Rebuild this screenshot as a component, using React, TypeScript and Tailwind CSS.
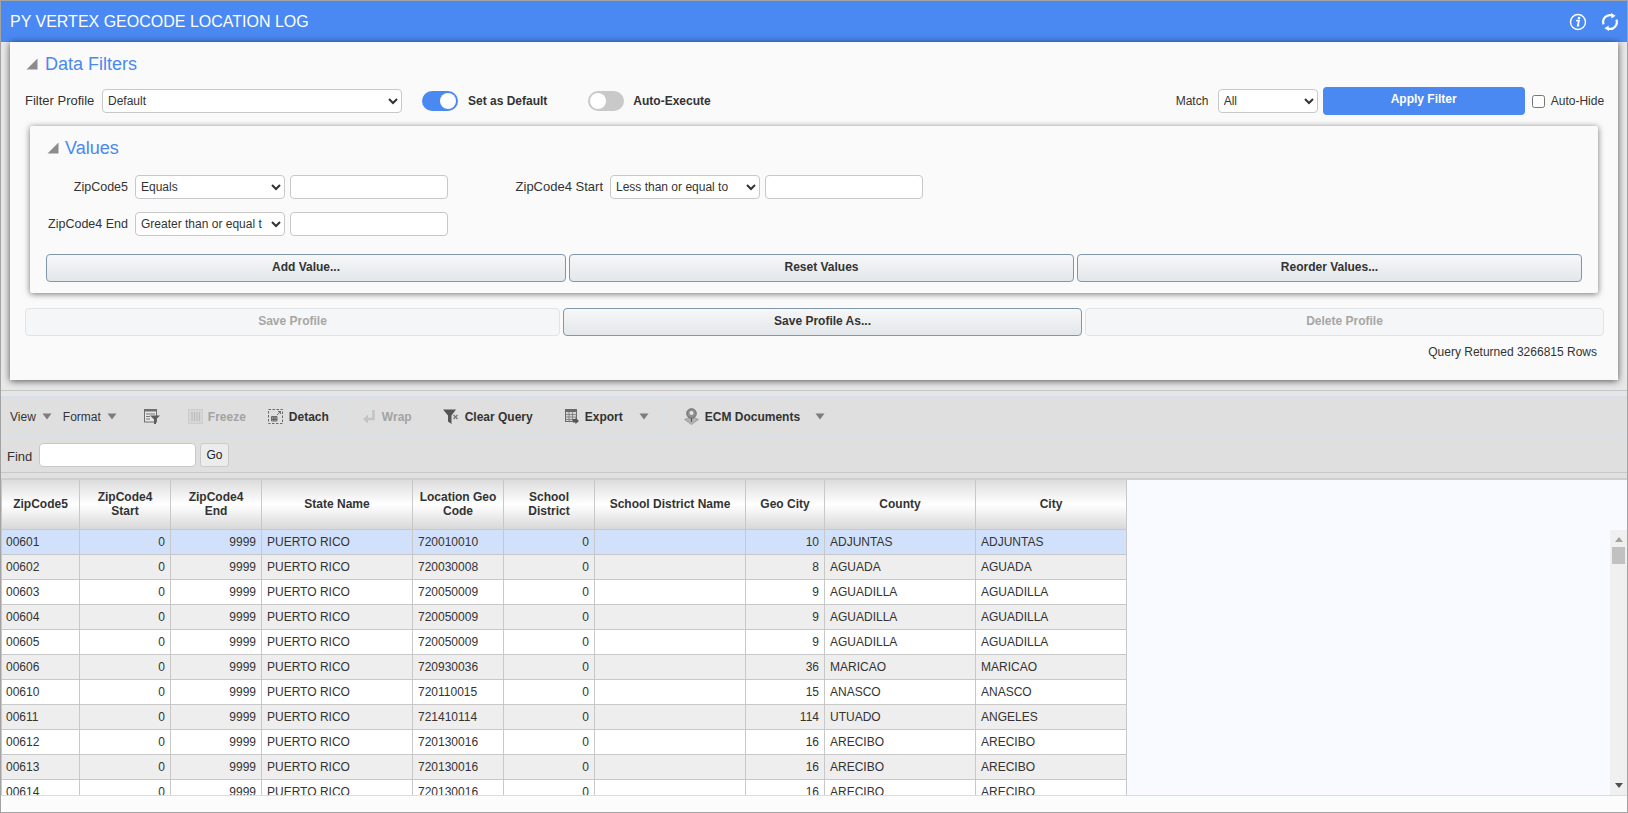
import type { ReactNode } from 'react'

const HEADERS = [
  ['ZipCode5'],
  ['ZipCode4', 'Start'],
  ['ZipCode4', 'End'],
  ['State Name'],
  ['Location Geo', 'Code'],
  ['School', 'District'],
  ['School District Name'],
  ['Geo City'],
  ['County'],
  ['City'],
]

const ROWS = [
  ['00601', '720010010', '10', 'ADJUNTAS', 'ADJUNTAS'],
  ['00602', '720030008', '8', 'AGUADA', 'AGUADA'],
  ['00603', '720050009', '9', 'AGUADILLA', 'AGUADILLA'],
  ['00604', '720050009', '9', 'AGUADILLA', 'AGUADILLA'],
  ['00605', '720050009', '9', 'AGUADILLA', 'AGUADILLA'],
  ['00606', '720930036', '36', 'MARICAO', 'MARICAO'],
  ['00610', '720110015', '15', 'ANASCO', 'ANASCO'],
  ['00611', '721410114', '114', 'UTUADO', 'ANGELES'],
  ['00612', '720130016', '16', 'ARECIBO', 'ARECIBO'],
  ['00613', '720130016', '16', 'ARECIBO', 'ARECIBO'],
  ['00614', '720130016', '16', 'ARECIBO', 'ARECIBO'],
]

function Triangle() {
  return (
    <svg width="12" height="12" viewBox="0 0 12 12" className="shrink-0">
      <polygon points="11.5,0.5 11.5,11.5 0.5,11.5" fill="#8c8c8c" />
    </svg>
  )
}

function Caret({ className }: { className: string }) {
  return (
    <svg width="10" height="7" viewBox="0 0 10 7" className={className}>
      <polygon points="0.5,0.5 9.5,0.5 5,6.5" fill="#7d7d7d" />
    </svg>
  )
}

function Sep({ className }: { className: string }) {
  return <div className={`w-px self-center bg-[#d9e0e8] ${className}`} />
}

function Toggle({ on }: { on: boolean }) {
  return (
    <div className={`flex h-5 w-9 items-center rounded-full px-[2px] ${on ? 'justify-end bg-[#4a88f2]' : 'justify-start bg-[#c9c9c9]'}`}>
      <div className="h-4 w-4 rounded-full bg-white" />
    </div>
  )
}

function Btn({ w, children, disabled }: { w: string; children: ReactNode; disabled?: boolean }) {
  return (
    <div
      className={`flex h-full items-center justify-center rounded-[4px] border pb-[2px] text-xs font-bold ${w} ${
        disabled
          ? 'border-[#e0e4e7] bg-[#f5f6f7] text-[#a6a6a6]'
          : 'border-[#7f97ad] bg-[linear-gradient(#f6f7f8,#e3e7ea)] text-[#333]'
      }`}
    >
      {children}
    </div>
  )
}

function FieldSelect({ w, value }: { w: string; value: string }) {
  return (
    <select
      defaultValue={value}
      className={`h-6 rounded-[4px] border border-[#c8c8c8] bg-white pl-[1px] pr-[6px] text-xs text-[#333] ${w}`}
    >
      <option>{value}</option>
    </select>
  )
}

function FieldInput({ w }: { w: string }) {
  return <input className={`h-6 rounded-[4px] border border-[#c8c8c8] bg-white ${w}`} />
}

export default function App() {
  return (
    <div className="flex h-[813px] w-[1628px] flex-col overflow-hidden border border-[#a3a3a3] bg-[#e8e8e8] font-['Liberation_Sans',Arial,sans-serif] text-xs text-[#333]">
      <div className="flex h-[41px] shrink-0 items-center bg-[#4a88f2] pl-[9px] pr-[8px] text-white">
        <span className="text-base">PY VERTEX GEOCODE LOCATION LOG</span>
        <svg width="18" height="18" viewBox="0 0 18 18" className="ml-auto">
          <circle cx="9" cy="9" r="7.5" fill="none" stroke="white" strokeWidth="1.4" />
          <circle cx="10" cy="5" r="1.3" fill="white" />
          <path d="M7.2 7.7h2.8l-1.3 5h1.5" fill="none" stroke="white" strokeWidth="1.7" />
        </svg>
        <svg width="18" height="18" viewBox="0 0 18 18" className="ml-[14px]">
          <path d="M2.6 11.4A6.9 6.9 0 0 1 10.8 2.3" fill="none" stroke="white" strokeWidth="2.2" />
          <path d="M15.4 6.6A6.9 6.9 0 0 1 7.2 15.7" fill="none" stroke="white" strokeWidth="2.2" />
          <polygon points="10,0 14.6,2.8 10.4,5.4" fill="white" />
          <polygon points="7.6,12.6 3.4,15.2 8,18" fill="white" />
        </svg>
      </div>

      <div className="h-[348px] shrink-0 pl-[9px]">
        <div className="h-[338px] w-[1608px] overflow-hidden bg-[#fafafa] shadow-[0_1px_7px_rgba(0,0,0,0.65)]">
          <div className="mt-[9px] flex h-[26px] items-center gap-[7px] pl-[16px]">
            <Triangle />
            <span className="text-lg text-[#4a88f2]">Data Filters</span>
          </div>

          <div className="mt-[10px] flex h-[28px] items-center pl-[15px]">
            <span className="w-[77px] text-[13px]">Filter Profile</span>
            <FieldSelect w="w-[300px]" value="Default" />
            <div className="ml-[20px]"><Toggle on /></div>
            <span className="ml-[10px] font-bold">Set as Default</span>
            <div className="ml-[41px]"><Toggle on={false} /></div>
            <span className="ml-[9px] font-bold">Auto-Execute</span>
            <span className="ml-[465px] w-[42px]">Match</span>
            <FieldSelect w="w-[100px]" value="All" />
            <div className="ml-[5px] flex h-full w-[202px] items-start justify-center rounded-[4px] bg-[#4a88f2] pt-[4px] font-bold text-white">
              Apply Filter
            </div>
            <input type="checkbox" className="ml-[7px] h-[13px] w-[13px]" />
            <span className="ml-[6px]">Auto-Hide</span>
          </div>

          <div className="ml-[20px] mt-[11px] h-[167px] w-[1568px] rounded-[2px] bg-[#fafafa] shadow-[0_1px_6px_rgba(0,0,0,0.55)]">
            <div className="flex h-[44px] items-center gap-[6px] pl-[17px]">
              <Triangle />
              <span className="text-lg text-[#4a88f2]">Values</span>
            </div>

            <div className="mt-[5px] flex h-6 items-center text-[12.5px]">
              <span className="w-[98px] text-right">ZipCode5</span>
              <div className="ml-[7px]"><FieldSelect w="w-[150px]" value="Equals" /></div>
              <div className="ml-[5px]"><FieldInput w="w-[158px]" /></div>
              <span className="w-[155px] text-right text-[13px]">ZipCode4 Start</span>
              <div className="ml-[7px]"><FieldSelect w="w-[150px]" value="Less than or equal to" /></div>
              <div className="ml-[5px]"><FieldInput w="w-[158px]" /></div>
            </div>

            <div className="mt-[13px] flex h-6 items-center text-[12.5px]">
              <span className="w-[98px] text-right">ZipCode4 End</span>
              <div className="ml-[7px]"><FieldSelect w="w-[150px]" value="Greater than or equal to" /></div>
              <div className="ml-[5px]"><FieldInput w="w-[158px]" /></div>
            </div>

            <div className="ml-[16px] mt-[18px] flex h-[28px] gap-[3px]">
              <Btn w="w-[520px]">Add Value...</Btn>
              <Btn w="w-[505px]">Reset Values</Btn>
              <Btn w="w-[505px]">Reorder Values...</Btn>
            </div>
          </div>

          <div className="ml-[15px] mt-[15px] flex h-[28px] gap-[3px]">
            <Btn w="w-[535px]" disabled>Save Profile</Btn>
            <Btn w="w-[519px]">Save Profile As...</Btn>
            <Btn w="w-[519px]" disabled>Delete Profile</Btn>
          </div>

          <div className="mt-[8px] pr-[21px] text-right">Query Returned 3266815 Rows</div>
        </div>
      </div>

      <div className="h-[7px] shrink-0 border-y border-t-[#c6c6c6] border-b-[#d5e1f0] bg-[#e6e6e6]" />

      <div className="flex h-[40px] shrink-0 items-stretch border-b border-[#d8e2ec] bg-[#dfdfdf]">
        <div className="flex items-center">
          <span className="ml-[9px]">View</span>
          <Caret className="ml-[6px]" />
          <span className="ml-[11px]">Format</span>
          <Caret className="ml-[6px]" />
        </div>
        <Sep className="ml-[14px] h-[38px]" />
        <div className="flex items-center">
          <svg width="16" height="15" viewBox="0 0 16 15" className="ml-[12px]">
            <rect x="0.5" y="0.5" width="12" height="12.5" fill="#e6e6e6" stroke="#6f6f6f" />
            <rect x="0.5" y="0.5" width="12" height="2" fill="#6f6f6f" />
            <path d="M2 5h9M2 7.5h4M2 10h4" stroke="#777" />
            <polygon points="6,6.5 16,6.5 12,10.5 12,15 10,15 10,10.5" fill="#5d5d5d" />
          </svg>
        </div>
        <Sep className="ml-[13px] h-[28px]" />
        <div className="flex items-center font-bold">
          <svg width="15" height="15" viewBox="0 0 15 15" className="ml-[14px]">
            <rect x="0.5" y="0.5" width="14" height="14" fill="#d6d6d6" stroke="#cdcdcd" />
            <path d="M4 3v9M6.5 3v9M9 3v9M11.5 3v9" stroke="#bdbdbd" strokeWidth="1.2" />
          </svg>
          <span className="ml-[5px] text-[#a3a3a3]">Freeze</span>
          <svg width="15" height="15" viewBox="0 0 15 15" className="ml-[22px]">
            <rect x="0.5" y="0.5" width="14" height="14" fill="none" stroke="#6a6a6a" strokeDasharray="2.5 1.5" />
            <path d="M3.5 7.5h5.5v4.5h-5.5zM3.5 9h5.5M3.5 10.5h5.5M5.3 7.5v4.5M7.1 7.5v4.5" fill="none" stroke="#555" strokeWidth="0.8" />
            <path d="M9 6l3.5-3.5M10 2.5h2.5v2.5" fill="none" stroke="#555" strokeWidth="0.8" />
          </svg>
          <span className="ml-[6px]">Detach</span>
        </div>
        <Sep className="ml-[15px] h-[28px]" />
        <div className="flex items-center font-bold">
          <svg width="12" height="14" viewBox="0 0 12 14" className="ml-[18px]">
            <path d="M10.5 0v9H4" fill="none" stroke="#c4c4c4" strokeWidth="2.6" />
            <polygon points="5,4.5 5,13.5 0,9" fill="#c4c4c4" />
          </svg>
          <span className="ml-[7px] text-[#a3a3a3]">Wrap</span>
        </div>
        <Sep className="ml-[17px] h-[38px]" />
        <div className="flex items-center font-bold">
          <svg width="16" height="15" viewBox="0 0 16 15" className="ml-[13px]">
            <polygon points="0,0.5 13,0.5 8.5,6.5 8.5,15 5,12.5 5,6.5" fill="#555" />
            <path d="M10.5 6l4 4M14.5 6l-4 4" stroke="#777" strokeWidth="1.4" />
          </svg>
          <span className="ml-[6px]">Clear Query</span>
        </div>
        <Sep className="ml-[16px] h-[38px]" />
        <div className="flex items-center font-bold">
          <svg width="14" height="15" viewBox="0 0 14 15" className="ml-[15px]">
            <rect x="0.5" y="0.5" width="11" height="12" fill="#d4d4d4" stroke="#6a6a6a" />
            <rect x="0.5" y="0.5" width="11" height="2.5" fill="#6a6a6a" />
            <path d="M0.5 5.5h11M0.5 8h11M0.5 10.5h11M4 3v9.5M7.5 3v9.5" stroke="#7a7a7a" strokeWidth="0.8" />
            <polygon points="8,10 10.5,10 10.5,8.5 14,12 10.5,15 10.5,13.5 8,13.5" fill="#555" />
          </svg>
          <span className="ml-[6px]">Export</span>
          <Caret className="ml-[16px]" />
        </div>
        <Sep className="ml-[15px] h-[38px]" />
        <div className="flex items-center font-bold">
          <svg width="15" height="17" viewBox="0 0 15 17" className="ml-[19px]">
            <polygon points="0.5,11.5 7.5,8.5 14.5,11.5 7.5,16.5" fill="#b3b3b3" stroke="#8a8a8a" strokeWidth="0.6" />
            <circle cx="7.5" cy="5.5" r="4.8" fill="#8f8f8f" stroke="#5c5c5c" strokeWidth="0.8" />
            <circle cx="7.5" cy="5" r="2" fill="#e4e4e4" />
            <path d="M7.5 10v4" stroke="#5c5c5c" strokeWidth="1.2" />
          </svg>
          <span className="ml-[6px]">ECM Documents</span>
          <Caret className="ml-[15px]" />
        </div>
      </div>

      <div className="flex h-[36px] shrink-0 items-center border-b border-[#c8c8c8] bg-[#dfdfdf]">
        <span className="ml-[6px] mt-[4px] w-[32px] text-[13px]">Find</span>
        <input className="h-6 w-[157px] rounded-[4px] border border-[#c8c8c8] bg-white" />
        <div className="ml-[4px] flex h-6 w-[29px] items-center justify-center rounded-[3px] border border-[#cbcbcb] bg-[#ececec] text-[#222]">Go</div>
      </div>

      <div className="h-[7px] shrink-0 border-b-2 border-[#cfcfcf] bg-[#e0e0e0]" />

      <div className="flex h-[315px] shrink-0 bg-[#f8faff]">
        <div className="flex-1 overflow-hidden">
          <table className="w-[1125px] table-fixed border-collapse">
            <colgroup>
              <col className="w-[78px]" />
              <col className="w-[91px]" />
              <col className="w-[91px]" />
              <col className="w-[151px]" />
              <col className="w-[91px]" />
              <col className="w-[91px]" />
              <col className="w-[151px]" />
              <col className="w-[79px]" />
              <col className="w-[151px]" />
              <col className="w-[151px]" />
            </colgroup>
            <thead>
              <tr className="h-[49px]">
                {HEADERS.map((lines, i) => (
                  <th
                    key={i}
                    className="border-x border-b border-[#c8c8c8] bg-[linear-gradient(#dcdcdc,#ffffff_50%,#d8d8d8)] p-0 text-center text-xs font-bold leading-[14px]"
                  >
                    {lines.map(l => (
                      <div key={l}>{l}</div>
                    ))}
                  </th>
                ))}
              </tr>
            </thead>
            <tbody>
              {ROWS.map((r, i) => {
                const bg = i === 0 ? 'bg-[#d2e1fb]' : i % 2 === 1 ? 'bg-[#eeeeee]' : 'bg-white'
                const cell = 'border border-[#c8c8c8] px-[5px] py-0 whitespace-nowrap'
                return (
                  <tr key={r[0]} className={`h-[25px] ${bg}`}>
                    <td className="whitespace-nowrap border border-[#c8c8c8] py-0 pl-[4px] pr-[5px]">{r[0]}</td>
                    <td className={`${cell} text-right`}>0</td>
                    <td className={`${cell} text-right`}>9999</td>
                    <td className={cell}>PUERTO RICO</td>
                    <td className={cell}>{r[1]}</td>
                    <td className={`${cell} text-right`}>0</td>
                    <td className={cell}></td>
                    <td className={`${cell} text-right`}>{r[2]}</td>
                    <td className={cell}>{r[3]}</td>
                    <td className={cell}>{r[4]}</td>
                  </tr>
                )
              })}
            </tbody>
          </table>
        </div>
        <div className="mt-[50px] flex h-[265px] w-[17px] shrink-0 flex-col items-center bg-[#f0f0f0]">
          <svg width="8" height="5" viewBox="0 0 8 5" className="mt-[7px]">
            <polygon points="4,0 8,5 0,5" fill="#a3a3a3" />
          </svg>
          <div className="mt-[5px] h-[17px] w-[13px] bg-[#c1c1c1]" />
          <svg width="8" height="5" viewBox="0 0 8 5" className="mb-[7px] mt-auto">
            <polygon points="0,0 8,0 4,5" fill="#505050" />
          </svg>
        </div>
      </div>

      <div className="flex-1 border-t border-[#d8dde0] bg-[#fcfcfc]" />
    </div>
  )
}
